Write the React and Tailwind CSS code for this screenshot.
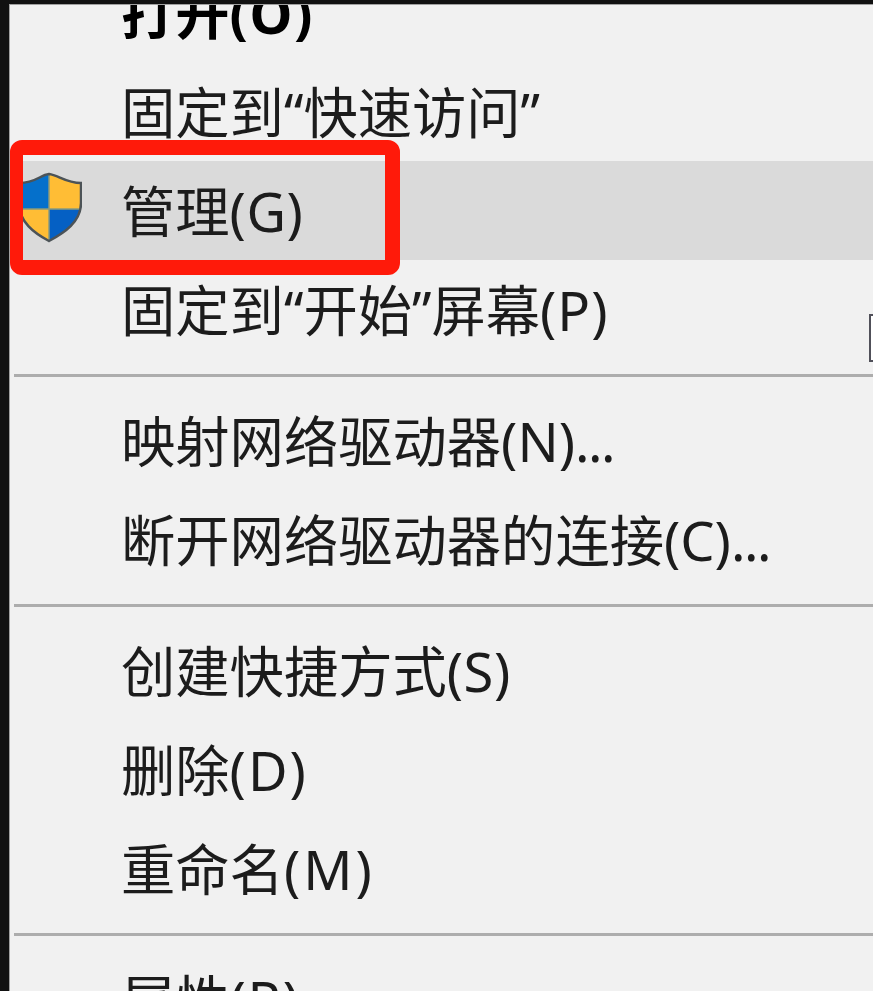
const groups = [
  [
    { label: "打开", hotkey: "(O)", bold: true, tracking: "tracking-[1.5px]" },
    { label: "固定到“快速访问”" },
    { label: "管理", hotkey: "(G)", shield: true, active: true, tracking: "tracking-[0.5px]" },
    { label: "固定到“开始”屏幕", hotkey: "(P)", tracking: "tracking-[1px]" },
  ],
  [
    { label: "映射网络驱动器", hotkey: "(N)", more: true },
    { label: "断开网络驱动器的连接", hotkey: "(C)", more: true },
  ],
  [
    { label: "创建快捷方式", hotkey: "(S)", tracking: "tracking-[0.5px]" },
    { label: "删除", hotkey: "(D)", tracking: "tracking-[2px]" },
    { label: "重命名", hotkey: "(M)", tracking: "tracking-[3px]" },
  ],
  [{ label: "属性", hotkey: "(R)", tracking: "tracking-[1.5px]" }],
];

function ShieldIcon() {
  return (
    <svg viewBox="0 0 66 72" className="h-[72px] w-[66px]">
      <defs>
        <clipPath id="shield">
          <path d="M33 2C24 3 20 11 3 11V31C3 50 18 61 33 69C48 61 65 50 65 31V11C50 11 42 3 33 2Z" />
        </clipPath>
      </defs>
      <g clipPath="url(#shield)">
        <path d="M0 0H33V37H0Z" fill="#0570cb" />
        <path d="M33 0H66V37H33Z" fill="#ffbd35" />
        <path d="M0 37H33V72H0Z" fill="#ffbd35" />
        <path d="M33 37H66V72H33Z" fill="#0560c4" />
        <path d="M33 0V72M0 37H66" stroke="#8b9a7c" strokeWidth="1.5" />
      </g>
      <path
        d="M33 2C24 3 20 11 3 11V31C3 50 18 61 33 69C48 61 65 50 65 31V11C50 11 42 3 33 2Z"
        fill="none"
        stroke="#4c5357"
        strokeWidth="2.5"
      />
    </svg>
  );
}

function MenuItem({ label, hotkey, more, bold, shield, active, tracking = "" }) {
  return (
    <div className={`relative flex h-[99px] items-center ${active ? "bg-[#dadada]" : ""}`}>
      <div className="flex w-[111px] shrink-0 pb-1.5 pl-1.5">{shield && <ShieldIcon />}</div>
      <span
        className={`pt-0.5 whitespace-nowrap text-[54.3px] leading-[97px] ${
          bold ? "font-bold text-black" : "font-normal text-[#1c1c1c]"
        }`}
      >
        {label}
        <span className={tracking}>{hotkey}</span>
        {more && <span className="tracking-[-1.5px]">...</span>}
      </span>
      {active && (
        <span className="absolute -top-[21px] left-0 h-[135px] w-[390px] rounded-[12px] border-y-[15px] border-r-[15px] border-l-[13px] border-[#ff1a0a]" />
      )}
    </div>
  );
}

export default function App() {
  return (
    <div className="h-[991px] w-full overflow-hidden bg-[#111111] pt-1 pl-[9px] font-['Noto_Sans','Noto_Sans_CJK_SC',sans-serif]">
      <div className="relative h-full overflow-hidden border-t border-l border-[#a0a0a0] bg-[#f1f1f1]">
        <div className="-mt-[42px]">
          {groups.map((items, i) => (
            <div key={i}>
              {i > 0 && (
                <div className="flex h-8 items-center pl-1">
                  <div className="h-[3px] w-full bg-[#adadad]" />
                </div>
              )}
              {items.map((item) => (
                <MenuItem key={item.label} {...item} />
              ))}
            </div>
          ))}
        </div>
        <span className="absolute top-[309px] left-[859px] h-12 w-4 border-2 border-[#505059] bg-white" />
      </div>
    </div>
  );
}
